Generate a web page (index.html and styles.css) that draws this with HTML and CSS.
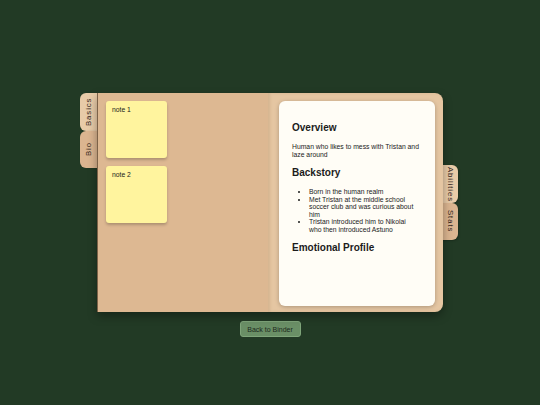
FILE: index.html
```html
<!DOCTYPE html>
<html lang="en">
<head>
    <meta charset="UTF-8">
    <meta name="viewport" content="width=device-width, initial-scale=1.0">
    <title>Character Binder</title>
    <link rel="stylesheet" href="styles.css">
</head>
<body>
    <div class="stage">
        <div class="binder-row">
            <div class="tabs tabs-left">
                <div class="tab tab-active">Basics</div>
                <div class="tab">Bio</div>
            </div>

            <div class="binder">
                <div class="page page-left">
                    <div class="note">note 1</div>
                    <div class="note">note 2</div>
                </div>

                <div class="page page-right">
                    <div class="sheet">
                        <h3>Overview</h3>
                        <p>Human who likes to mess with Tristan and laze around</p>

                        <h3>Backstory</h3>
                        <ul>
                            <li>Born in the human realm</li>
                            <li>Met Tristan at the middle school soccer club and was curious about him</li>
                            <li>Tristan introduced him to Nikolai who then introduced Astuno</li>
                        </ul>

                        <h3>Emotional Profile</h3>
                    </div>
                </div>
            </div>

            <div class="tabs tabs-right">
                <div class="tab tab-active">Abilities</div>
                <div class="tab">Stats</div>
            </div>
        </div>

        <button class="back-btn">Back to Binder</button>
    </div>
</body>
</html>
```

FILE: styles.css
```css
body {
    margin: 0;
    background: #223a25;
    font-family: 'Liberation Sans', Arial, sans-serif;
    color: #1b1b1b;
    min-height: 100vh;
}

.stage {
    display: flex;
    flex-direction: column;
    align-items: center;
    padding-top: 93px;
}

.binder-row {
    display: flex;
    align-items: flex-start;
    margin-right: 2px;
}

/* side tabs */
.tabs {
    display: flex;
    flex-direction: column;
}

.tab {
    width: 17px;
    height: 37px;
    display: flex;
    align-items: center;
    justify-content: center;
    writing-mode: vertical-rl;
    font-size: 7.8px;
    letter-spacing: 0.9px;
    color: #33251a;
    background: #dbb590;
    box-sizing: border-box;
}

.tab-active {
    background: #e8cba8;
    height: 38px;
}

.tabs-left .tab {
    transform: rotate(180deg);
    border-radius: 0 6px 6px 0;
    box-shadow: -1px 0 2px rgba(0,0,0,0.15);
}

.tabs-right {
    margin-top: 72px;
    margin-left: -2px;
}

.tabs-right .tab {
    border-radius: 0 6px 6px 0;
    box-shadow: 1px 1px 2px rgba(0,0,0,0.2);
    border-left: 1px solid #b8966f;
}

/* the binder itself */
.binder {
    display: flex;
    height: 219px;
    box-shadow: 0 4px 10px rgba(0,0,0,0.35);
    border-radius: 0 8px 8px 0;
    position: relative;
    z-index: 1;
}

.page-left {
    width: 154px;
    padding: 8px;
    background: #ddb892;
    border-left: 1px solid #7d6248;
    display: flex;
    flex-direction: column;
    gap: 8px;
}

.note {
    width: 61px;
    height: 57px;
    box-sizing: border-box;
    padding: 5px 6px;
    background: #fff49e;
    border-radius: 3px;
    box-shadow: 0 2px 3px rgba(0,0,0,0.22);
    font-size: 6.8px;
    line-height: 8px;
}

.page-right {
    width: 175px;
    box-sizing: border-box;
    padding: 8px 8px 6px 11px;
    background: #e5c6a2;
    border-radius: 0 8px 8px 0;
    box-shadow: inset 2px 0 3px rgba(120,80,40,0.15);
}

.sheet {
    height: 100%;
    box-sizing: border-box;
    padding: 12px 13px;
    background: #fffdf6;
    border-radius: 6px;
    box-shadow: 0 1px 4px rgba(0,0,0,0.25);
    font-size: 6.8px;
    line-height: 7.5px;
}

.sheet h3 {
    font-size: 10px;
    line-height: 14px;
    margin: 8px 0 8px;
}

.sheet h3:not(:first-child) {
    margin-top: 7px;
}

.sheet p {
    margin: 8px 0;
}

.sheet ul {
    margin: 8px 0;
    padding: 0 5px 0 17px;
}

.back-btn {
    margin-top: 9px;
    width: 61px;
    height: 16px;
    padding: 0;
    background: #6a8f66;
    border: 1px solid #7fa57a;
    border-radius: 3px;
    color: #1c2a1c;
    font-family: 'Liberation Sans', Arial, sans-serif;
    font-size: 7px;
}
```
